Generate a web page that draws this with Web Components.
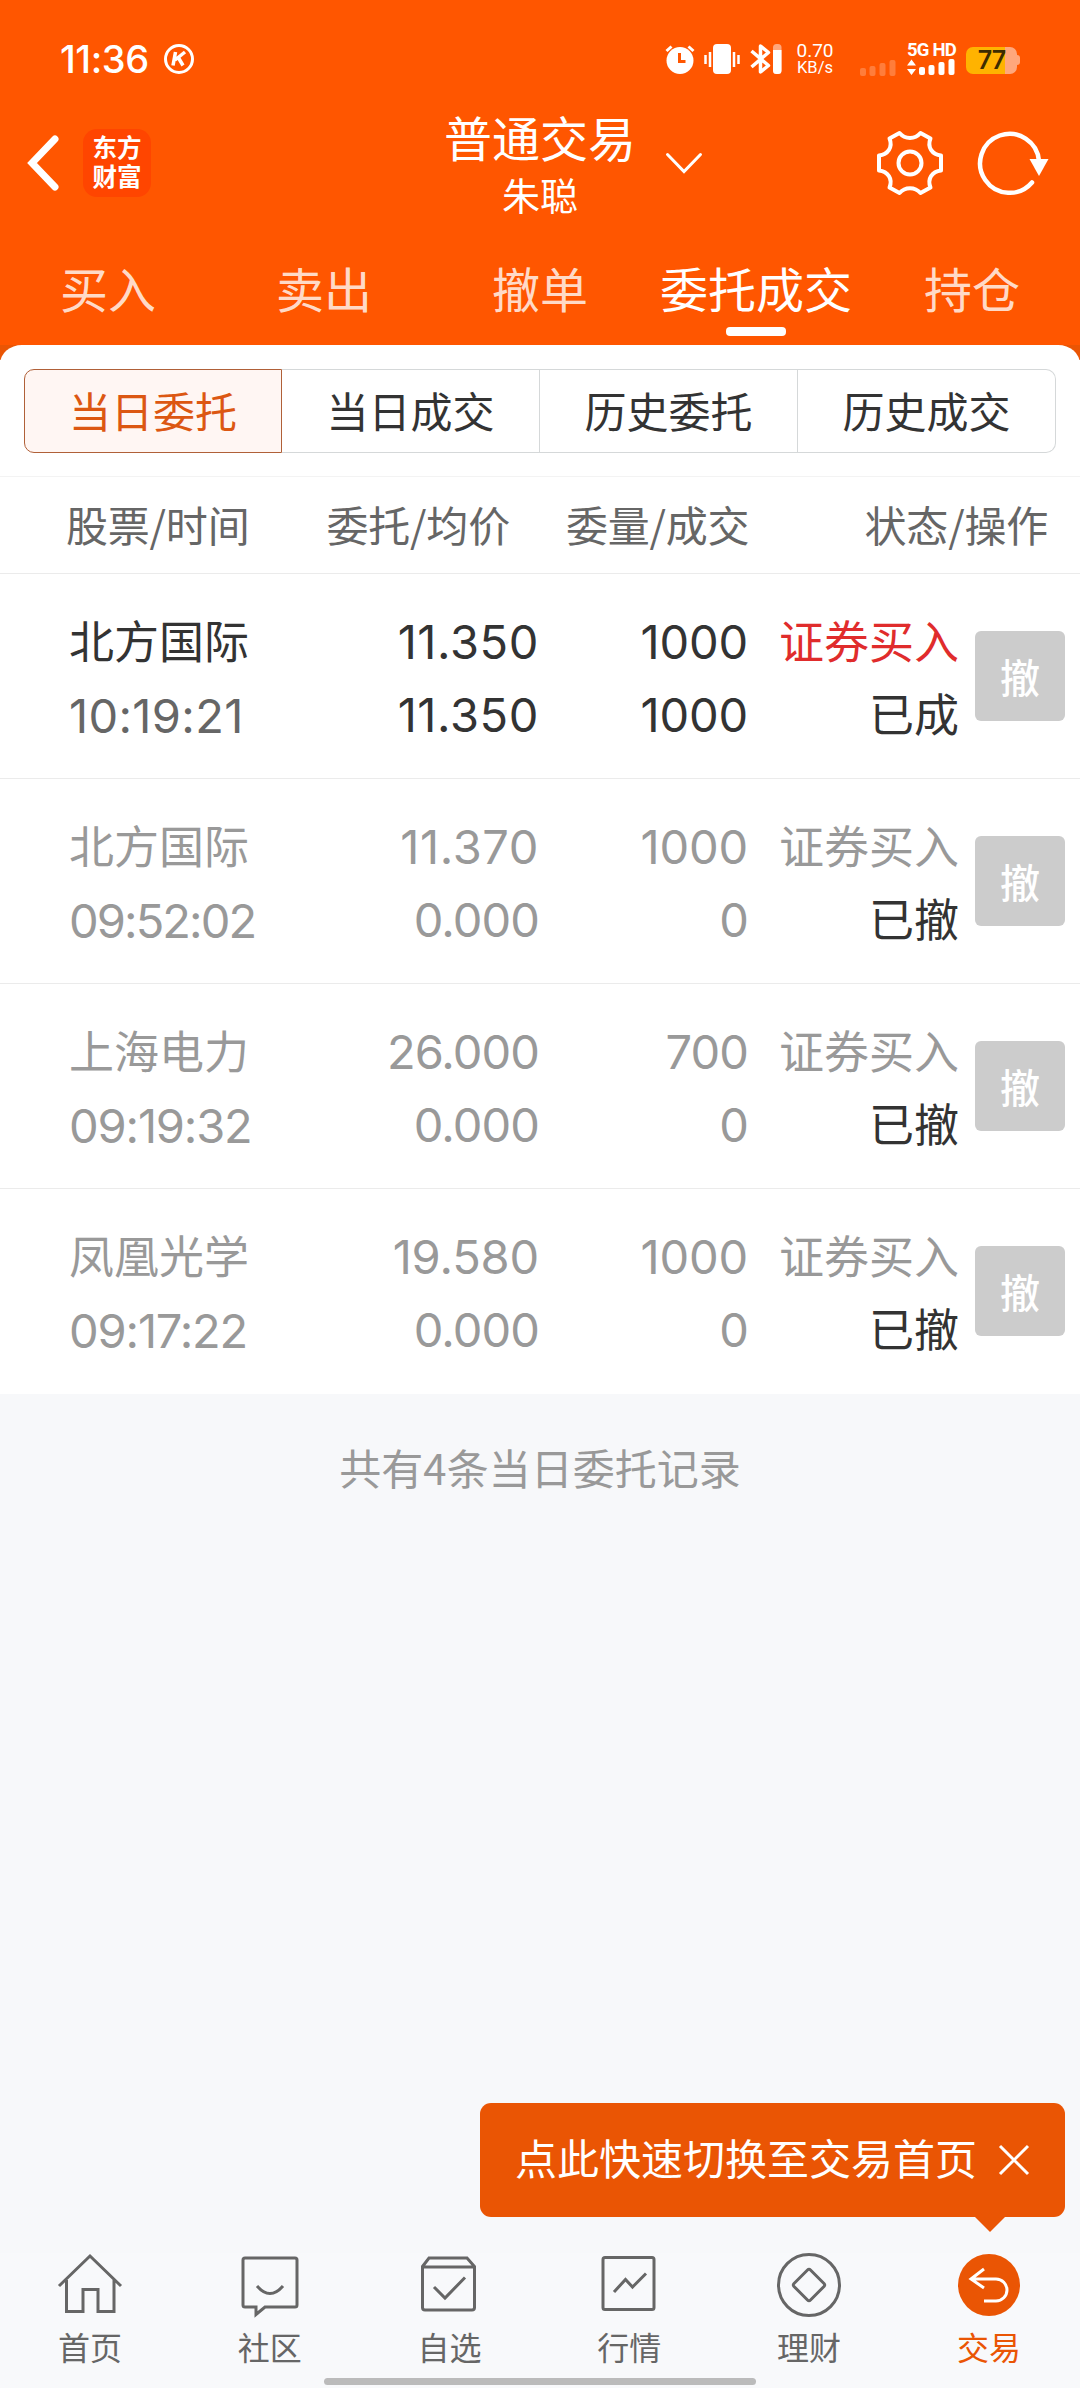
<!DOCTYPE html>
<html lang="zh-CN">
<head>
<meta charset="utf-8">
<title>普通交易</title>
<style>
    html, body { margin: 0; padding: 0; }
    body {
        width: 1080px;
        height: 2388px;
        overflow: hidden;
        background: #f7f8fa;
        font-family: Inter, "Noto Sans CJK SC", sans-serif;
        color: #333;
    }
</style>
</head>
<body>
<trade-app></trade-app>
<script>
const ICONS = {
    back: [34, 58, '<path d="M29 5 6 29l23 24" stroke="#fff" stroke-width="7" fill="none" stroke-linecap="round" stroke-linejoin="miter"/>'],
    chevron: [40, 24, '<path d="m3.500 3.500 16.500 17 16.500-17" stroke="#fff" stroke-width="3" fill="none" stroke-linecap="round"/>'],
    gear: [70, 70, `<g transform="translate(35 35)" fill="none" stroke="#fff" stroke-width="4" stroke-linejoin="round">
        <path d="M-10.500-30C-5-23.500 5-23.500 10.500-30L20.500-24.500C17-16 22-8.500 31-7.500V7.500C22 8.500 17 16 20.500 24.500L10.500 30C5 23.500-5 23.500-10.500 30L-20.500 24.500C-17 16-22 8.500-31 7.500V-7.500C-22-8.500-17-16-20.500-24.500Z"/>
        <circle r="11.500"/></g>`],
    refresh: [76, 70, '<path d="M63 34A29.500 29.500 0 1 0 56 55.500" fill="none" stroke="#fff" stroke-width="4.500" stroke-linecap="round"/><path d="M53.500 32h19L63 49Z" fill="#fff"/>'],
    close: [32, 32, '<path d="m2 2 28 28M30 2 2 30" stroke="#fff" stroke-width="3" fill="none"/>'],
    kmark: [30, 30, '<circle cx="15" cy="15" r="13.500" fill="none" stroke="#fff" stroke-width="3"/><path d="m11.500 8-2.500 13.500M21 8l-10 8M14 13l5 8.500" stroke="#fff" stroke-width="3.500" fill="none"/>'],
    alarm: [30, 30, '<circle cx="15" cy="16.500" r="13.500" fill="#fff"/><path d="m1.500 7 5-4.500M28.500 7l-5-4.500" stroke="#fff" stroke-width="3"/><path d="M14.500 9v8.500h6" fill="none" stroke="#ff5600" stroke-width="3"/>'],
    vibrate: [36, 30, '<rect x="9" y="0" width="18" height="30" rx="4" fill="#fff"/><path d="M1.500 11v9M6 8v15M30 8v15M34.500 11v9" stroke="#fff" stroke-width="2.500"/>'],
    bluetooth: [32, 30, '<path d="m1.500 7 17 14.500-8 6.500V2l8 6.500L1.500 23" fill="none" stroke="#fff" stroke-width="3.500" stroke-linejoin="round"/><rect x="23" y="0" width="8.500" height="30" rx="3.500" fill="#ffa77c"/><path d="M23 6h8.500v20.500a3.500 3.500 0 0 1-3.500 3.500h-1.500a3.500 3.500 0 0 1-3.500-3.500Z" fill="#fff"/>'],
    weak: [36, 16, '<g fill="#fff" opacity=".23"><rect y="8" width="6" height="8" rx="2"/><rect x="9.500" y="6" width="6" height="10" rx="2"/><rect x="19.500" y="3" width="6" height="13" rx="2"/><rect x="29.500" width="6" height="16" rx="2"/></g>'],
    signal: [48, 16, '<g fill="#fff"><path d="m0 6.500 4.500-6 4.500 6ZM0 10h9l-4.500 6Z"/><rect x="12" y="8" width="6" height="8" rx="2"/><rect x="21.500" y="6" width="6" height="10" rx="2"/><rect x="31.500" y="3" width="6" height="13" rx="2"/><rect x="41.500" width="6" height="16" rx="2"/></g>'],
    home: [64, 64, '<path d="M1 33 32 3l31 30M8.500 27v31.500H25V36.500h15v22h16V27"/>'],
    community: [64, 64, '<path d="M7 5h50q2 0 2 2v45q0 2-2 2H27l-9 7.500V54H7q-2 0-2-2V7q0-2 2-2ZM19 33q13 15 26 0"/>'],
    picks: [64, 64, '<path d="M5.500 13.500 12 5h38l7.500 8.500v41q0 2.500-2.500 2.500H8q-2.500 0-2.500-2.500ZM5.500 14h52M17 34l11 11 20-20.500"/>'],
    market: [64, 64, '<rect x="6" y="4.500" width="51" height="52" rx="2"/><path d="m17 39 11.500-12.500 7 7.500L49 20.500"/>'],
    wealth: [64, 64, '<circle cx="32" cy="32" r="30.500"/><path d="M30.500 17q1.500-1.500 3 0L47 30.500q1.500 1.500 0 3L33.500 47q-1.500 1.500-3 0L17 33.500q-1.500-1.500 0-3Z"/>'],
    trade: [64, 64, '<circle cx="32" cy="32" r="31" fill="#ea5504" stroke="none"/><path d="M27 16 14 26l13 9M15 26h24a10.500 10.500 0 0 1 0 22H27" stroke="#fff" stroke-width="3"/>'],
};

class UiIcon extends HTMLElement {
    constructor() {
        super();
        this.attachShadow({mode: 'open'});
    }
    connectedCallback() {
        const [width, height, body] = ICONS[this.getAttribute('name')];
        this.shadowRoot.innerHTML = `
            <style>
                :host { display: block; flex: none; }
                svg { display: block; overflow: visible; }
            </style>
            <svg width="${width}" height="${height}" viewBox="0 0 ${width} ${height}" fill="none" stroke-width="3">${body}</svg>
        `;
    }
}
customElements.define('ui-icon', UiIcon);

class StatusBar extends HTMLElement {
    constructor() {
        super();
        this.attachShadow({mode: 'open'}).innerHTML = `
            <style>
                :host { display: flex; height: 30px; padding: 44px 60px 0; color: #fff; align-items: center; }
                .time { font-size: 38px; line-height: 30px; font-weight: 450; width: 88px; margin-right: 16px; letter-spacing: -.4px; white-space: nowrap; }
                .right { display: flex; align-items: center; margin-left: auto; }
                .speed { width: 38px; margin: 0 26px 0 14px; text-align: center; }
                .speed div { font: 400 19px/17px Roboto; }
                .speed div + div { font-size: 16.500px; line-height: 17px; }
                .weak { align-self: flex-end; }
                .cell { width: 48px; margin: -2px 11px 0 11px; }
                .cell div { font: 700 18.500px/18px Roboto; letter-spacing: -.8px; white-space: nowrap; }
                .battery { width: 51px; height: 27px; border-radius: 7px; margin: 3px 3px 0 0; text-align: center; background: linear-gradient(90deg, #ffb300 39px, #ffa77c 39px); color: #3d2c00; font: 600 25px/27px Inter; letter-spacing: -1px; position: relative; }
                .battery::after { content: ""; position: absolute; right: -3px; top: 8px; width: 3px; height: 10px; border-radius: 0 3px 3px 0; background: #ffa77c; }
            </style>
            <div class="time">11:36</div><ui-icon name="kmark"></ui-icon>
            <div class="right">
                <ui-icon name="alarm"></ui-icon>
                <ui-icon name="vibrate" style="margin: 0 10px 0 9px"></ui-icon>
                <ui-icon name="bluetooth"></ui-icon>
                <div class="speed"><div>0.70</div><div>KB/s</div></div>
                <ui-icon class="weak" name="weak"></ui-icon>
                <div class="cell"><div>5G HD</div><ui-icon name="signal"></ui-icon></div>
                <div class="battery">77</div>
            </div>
        `;
    }
}
customElements.define('status-bar', StatusBar);

class TitleBar extends HTMLElement {
    constructor() {
        super();
        this.attachShadow({mode: 'open'}).innerHTML = `
            <style>
                :host { display: grid; grid-template-columns: 1fr auto 1fr; align-items: center; height: 112px; margin-top: 34px; padding: 0 26px; color: #fff; }
                .left, .right { display: flex; align-items: center; margin-top: -4px; }
                .logo { width: 68px; height: 68px; margin-left: 23px; border-radius: 14px; background: #ff4500; display: grid; place-content: center; text-align: center; font-size: 24.500px; line-height: 29px; font-weight: 700; }
                .middle { text-align: center; }
                .title { font-size: 48px; line-height: 63px; }
                .name { font-size: 38px; line-height: 51px; }
                .right { justify-content: flex-end; }
                .chevron { margin-right: auto; margin-left: 28px; }
            </style>
            <div class="left"><ui-icon name="back"></ui-icon><div class="logo">东方<br>财富</div></div>
            <div class="middle"><div class="title"><slot></slot></div><div class="name"><slot name="user"></slot></div></div>
            <div class="right">
                <ui-icon class="chevron" name="chevron"></ui-icon>
                <ui-icon name="gear"></ui-icon>
                <ui-icon name="refresh" style="margin: -2px 2px 0 31px; width: 76px"></ui-icon>
            </div>
        `;
    }
}
customElements.define('title-bar', TitleBar);

class TradeTab extends HTMLElement {
    constructor() {
        super();
        this.attachShadow({mode: 'open'}).innerHTML = `
            <style>
                :host { display: flex; flex-direction: column; align-items: center; font-size: 48px; line-height: 72px; color: rgba(255, 255, 255, .8); white-space: nowrap; }
                :host([active]) { color: #fff; }
                :host([active])::after { content: ""; width: 60px; height: 9px; border-radius: 4px; background: #fff; }
            </style>
            <slot></slot>
        `;
    }
}
customElements.define('trade-tab', TradeTab);

class SegmentTabs extends HTMLElement {
    constructor() {
        super();
        this.attachShadow({mode: 'open'}).innerHTML = `
            <style>
                :host { display: grid; grid-template-columns: repeat(4, 1fr); margin: 0 24px; height: 84px; font-size: 42px; line-height: 86px; text-align: center; }
                ::slotted(*) { height: 82px; border: 1px solid #d5d8d9; border-left-width: 0; }
                ::slotted(:first-child) { border: 1px solid #b06038; border-radius: 10px 0 0 10px; background: #fff6f3; color: #dc5712; }
                ::slotted(:last-child) { border-radius: 0 10px 10px 0; }
            </style>
            <slot></slot>
        `;
    }
}
customElements.define('segment-tabs', SegmentTabs);

class OrderRow extends HTMLElement {
    constructor() {
        super();
        this.attachShadow({mode: 'open'});
    }
    connectedCallback() {
        const get = (name) => this.getAttribute(name);
        // the digit 1 is narrow, so strings with many of them are set looser
        const digits = (name, base = -0.9) => {
            const value = get(name);
            const ones = value.split('1').length - 1;
            const spacing = (ones * 0.75 + base).toFixed(2);
            return `<div class="${name}" style="letter-spacing: ${spacing}px">${value}</div>`;
        };
        this.shadowRoot.innerHTML = `
            <style>
                :host { display: grid; grid-template-columns: 230px 240px 209px 211px 1fr; height: 204px; padding: 0 15px 0 69px; align-items: center; border-bottom: 1px solid #ebebeb; color: #999; --time: #999; }
                :host([done]) { color: #333; --time: #666; }
                :host([done]) .side { color: #e02c2c; }
                :host(:last-of-type) { border-color: transparent; }
                .col { font-size: 45px; line-height: 73px; margin-top: 5px; white-space: nowrap; }
                .num { text-align: right; }
                .num, .time { font-size: 47px; font-weight: 380; }
                .num { margin-top: 4px; }
                .time { color: var(--time); }
                .state { color: #333; }
                button { justify-self: end; width: 90px; height: 90px; padding: 0; border: 0; border-radius: 6px; background: #ccc; color: #fff; font: 500 40px/86px "Noto Sans CJK SC", sans-serif; }
            </style>
            <div class="col"><div>${get('stock')}</div>${digits('time', -1.9)}</div>
            <div class="col num">${digits('price')}${digits('average')}</div>
            <div class="col num">${digits('amount')}${digits('filled')}</div>
            <div class="col" style="text-align: right"><div class="side">证券买入</div><div class="state">${get('state')}</div></div>
            <button>撤</button>
        `;
    }
}
customElements.define('order-row', OrderRow);

class OrderList extends HTMLElement {
    constructor() {
        super();
        this.attachShadow({mode: 'open'}).innerHTML = `
            <style>
                :host { display: block; margin-top: 23px; border-top: 1px solid #f3f3f3; background: #fff; }
                .head { display: flex; height: 96px; padding: 0 32px 0 66px; align-items: center; font-family: "Noto Sans CJK SC", sans-serif; font-size: 42px; line-height: 60px; color: #666; white-space: nowrap; border-bottom: 1px solid #ebebeb; }
                .head span { margin-top: -2px; letter-spacing: -.2px; }
                .head span:nth-child(2) { margin-left: 77px; }
                .head span:nth-child(3) { margin-left: 56px; }
                .head span:nth-child(4) { margin-left: auto; }
            </style>
            <div class="head"><span>股票/时间</span><span>委托/均价</span><span>委量/成交</span><span>状态/操作</span></div>
            <slot></slot>
        `;
    }
}
customElements.define('order-list', OrderList);

class TradeTip extends HTMLElement {
    constructor() {
        super();
        this.attachShadow({mode: 'open'}).innerHTML = `
            <style>
                :host { position: absolute; right: 15px; bottom: 171px; display: flex; align-items: center; box-sizing: border-box; width: 585px; height: 114px; padding: 0 35px; border-radius: 11px; background: #ea5504; color: #fff; font-size: 42px; line-height: 60px; white-space: nowrap; }
                :host::after { content: ""; position: absolute; top: 100%; right: 60px; border: 15px solid transparent; border-top-color: #ea5504; border-bottom: 0; }
                ui-icon { margin-left: auto; }
            </style>
            <slot></slot><ui-icon name="close"></ui-icon>
        `;
    }
}
customElements.define('trade-tip', TradeTip);

class NavItem extends HTMLElement {
    constructor() {
        super();
        this.attachShadow({mode: 'open'}).innerHTML = `
            <style>
                :host { display: flex; flex-direction: column; align-items: center; width: 179.800px; font-size: 32px; line-height: 44px; color: #666; }
                :host([active]) { color: #ea5504; }
                ui-icon { stroke: currentColor; margin-bottom: 10px; }
            </style>
            <ui-icon name="${this.getAttribute('icon')}"></ui-icon><slot></slot>
        `;
    }
}
customElements.define('nav-item', NavItem);

class BottomNav extends HTMLElement {
    constructor() {
        super();
        this.attachShadow({mode: 'open'}).innerHTML = `
            <style>
                :host { display: flex; flex-direction: column; height: 135px; background: #f8f9fb; }
                .items { display: flex; height: 125px; }
                .gesture { width: 432px; height: 7px; border-radius: 4px; margin: 0 auto; background: #bbb; }
            </style>
            <div class="items"><slot></slot></div>
            <div class="gesture"></div>
        `;
    }
}
customElements.define('bottom-nav', BottomNav);

class TradeApp extends HTMLElement {
    constructor() {
        super();
        this.attachShadow({mode: 'open'}).innerHTML = `
            <style>
                :host { display: flex; flex-direction: column; width: 1080px; height: 2388px; position: relative; }
                header { height: 345px; background: #ff5600; }
                nav { display: grid; grid-template-columns: repeat(5, 216px); margin-top: 35px; }
                .corner { height: 24px; background: linear-gradient(#ea5504 15px, #fff 15px); }
                .corner div { height: 24px; background: #fff; border-radius: 22px 22px 0 0 / 19px 19px 0 0; }
                .sheet { background: #fff; }
                .summary { flex: 1; padding-top: 43px; text-align: center; font-size: 42px; line-height: 60px; color: #999; font-family: "Noto Sans CJK SC", sans-serif; }
            </style>
            <header>
                <status-bar></status-bar>
                <title-bar>普通交易<span slot="user">朱聪</span></title-bar>
                <nav>
                    <trade-tab>买入</trade-tab>
                    <trade-tab>卖出</trade-tab>
                    <trade-tab>撤单</trade-tab>
                    <trade-tab active>委托成交</trade-tab>
                    <trade-tab>持仓</trade-tab>
                </nav>
            </header>
            <div class="corner"><div></div></div>
            <div class="sheet">
                <segment-tabs><div>当日委托</div><div>当日成交</div><div>历史委托</div><div>历史成交</div></segment-tabs>
                <order-list>
                    <order-row done stock="北方国际" time="10:19:21" price="11.350" average="11.350" amount="1000" filled="1000" state="已成"></order-row>
                    <order-row stock="北方国际" time="09:52:02" price="11.370" average="0.000" amount="1000" filled="0" state="已撤"></order-row>
                    <order-row stock="上海电力" time="09:19:32" price="26.000" average="0.000" amount="700" filled="0" state="已撤"></order-row>
                    <order-row stock="凤凰光学" time="09:17:22" price="19.580" average="0.000" amount="1000" filled="0" state="已撤"></order-row>
                </order-list>
            </div>
            <div class="summary">共有4条当日委托记录</div>
            <trade-tip>点此快速切换至交易首页</trade-tip>
            <bottom-nav>
                <nav-item icon="home">首页</nav-item>
                <nav-item icon="community">社区</nav-item>
                <nav-item icon="picks">自选</nav-item>
                <nav-item icon="market">行情</nav-item>
                <nav-item icon="wealth">理财</nav-item>
                <nav-item icon="trade" active>交易</nav-item>
            </bottom-nav>
        `;
    }
}
customElements.define('trade-app', TradeApp);
</script>
</body>
</html>
